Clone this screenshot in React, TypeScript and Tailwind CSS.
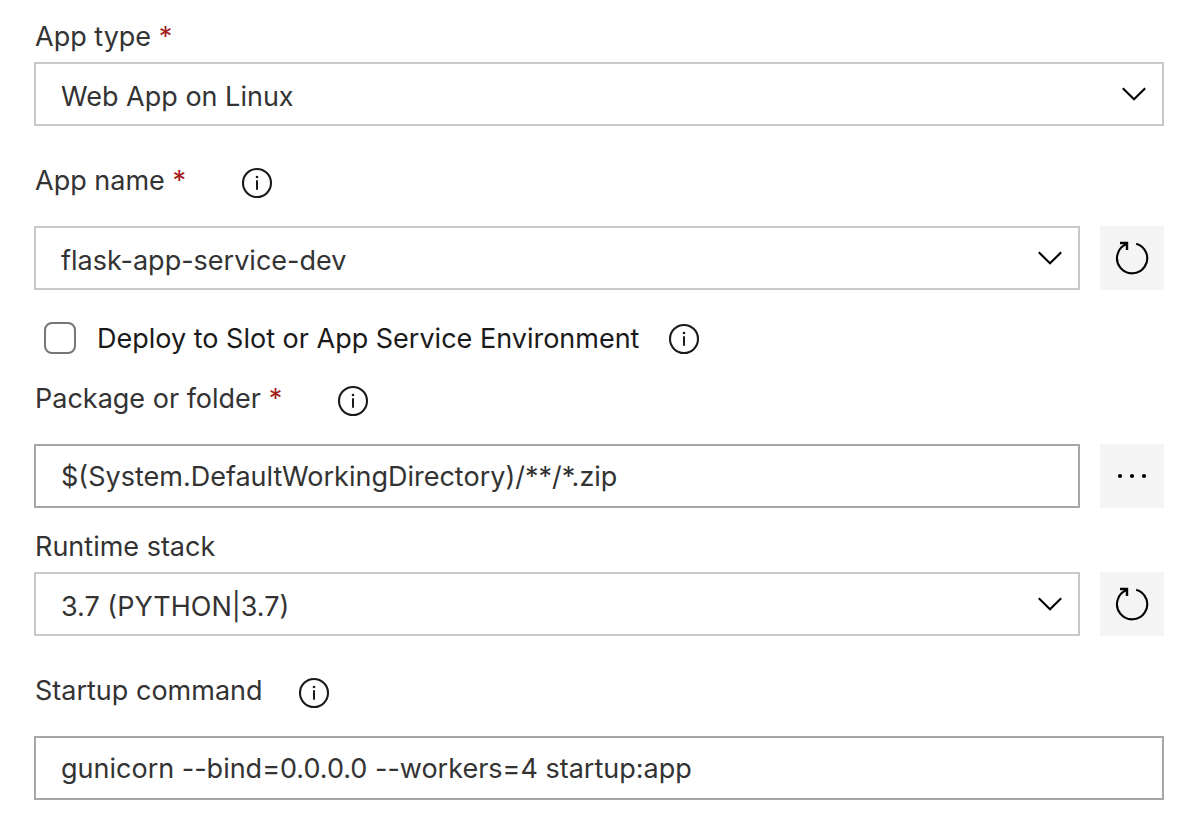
import { useId, type ReactNode } from "react";

function InfoIcon() {
  return (
    <svg className="size-8 shrink-0" viewBox="0 0 32 32" fill="none" aria-hidden="true">
      <circle cx="15" cy="16" r="14" stroke="#1a1a1a" strokeWidth="2.1" />
      <path d="M15 13.2V22.8" stroke="#1a1a1a" strokeWidth="2" />
      <circle cx="15" cy="10" r="1.3" fill="#1a1a1a" />
    </svg>
  );
}

function ChevronIcon() {
  return (
    <svg
      className="pointer-events-none absolute top-[21px] right-[18px] h-5 w-6"
      viewBox="0 0 24 20"
      fill="none"
      aria-hidden="true"
    >
      <path d="M0.8 5.3L12 16.3L23.2 5.3" stroke="#000" strokeWidth="2.1" />
    </svg>
  );
}

function RefreshIcon() {
  return (
    <svg className="size-9" viewBox="0 0 36 36" fill="none" aria-hidden="true">
      <path d="M22.2 3.7A15.1 15.1 0 1 1 12.8 4.1" stroke="#000" strokeWidth="2.1" />
      <path d="M6 3H13V10" stroke="#000" strokeWidth="2.4" />
    </svg>
  );
}

function MoreIcon() {
  return (
    <svg className="size-9" viewBox="0 0 36 36" fill="#000" aria-hidden="true">
      <circle cx="6" cy="18" r="2.1" />
      <circle cx="18" cy="18" r="2.1" />
      <circle cx="30" cy="18" r="2.1" />
    </svg>
  );
}

function InfoButton({ topic }: { topic: string }) {
  return (
    <button type="button" aria-label={"More information about " + topic} className="shrink-0">
      <InfoIcon />
    </button>
  );
}

type FieldProps = {
  label: string;
  required?: boolean;
  info?: boolean;
  action?: ReactNode;
  children: (id: string) => ReactNode;
};

function Field({ label, required, info, action, children }: FieldProps) {
  const id = useId();
  return (
    <div className={info ? "flex flex-col gap-[27px]" : "flex flex-col gap-[7px]"}>
      <div className={required ? "flex items-end gap-14 pl-px" : "flex items-end gap-9 pl-px"}>
        <label htmlFor={id} className="pb-0.5 leading-8">
          {label}
          {required && <span className="text-[#a4201c]"> *</span>}
        </label>
        {info && <InfoButton topic={label} />}
      </div>
      <div className="flex gap-5">
        {children(id)}
        {action}
      </div>
    </div>
  );
}

function Select({ id, value }: { id: string; value: string }) {
  return (
    <div className="relative min-w-0 flex-1">
      <select
        id={id}
        defaultValue={value}
        className="h-16 w-full appearance-none border-2 border-[#c8c8c8] bg-white pt-1.5 pr-14 pl-[25px]"
      >
        <option>{value}</option>
      </select>
      <ChevronIcon />
    </div>
  );
}

function TextBox({ id, value }: { id: string; value: string }) {
  return (
    <input
      id={id}
      type="text"
      defaultValue={value}
      className="h-16 min-w-0 flex-1 border-2 border-[#a6a6a6] bg-white px-[25px]"
    />
  );
}

function ActionButton({ label, children }: { label: string; children: ReactNode }) {
  return (
    <button
      type="button"
      aria-label={label}
      className="flex size-16 shrink-0 items-center justify-center bg-[#f4f4f4]"
    >
      {children}
    </button>
  );
}

export default function App() {
  return (
    <form className="flex flex-col bg-white pt-[21px] pr-3.5 pb-4 pl-[34px] font-['Inter',sans-serif] text-[27px] text-[#333]">
      <Field label="App type" required>
        {(id) => <Select id={id} value="Web App on Linux" />}
      </Field>

      <div className="pt-[39px]">
        <Field
          label="App name"
          required
          info
          action={
            <ActionButton label="Refresh app names">
              <RefreshIcon />
            </ActionButton>
          }
        >
          {(id) => <Select id={id} value="flask-app-service-dev" />}
        </Field>
      </div>

      <div className="flex items-end gap-[30px] pt-[31px] pl-2.5">
        <label className="flex items-center gap-[21px] leading-8 text-[#1a1a1a]">
          <input
            type="checkbox"
            className="size-8 shrink-0 appearance-none rounded-lg border-2 border-[#767676] bg-white"
          />
          <span className="pt-0.5">Deploy to Slot or App Service Environment</span>
        </label>
        <InfoButton topic="Deploy to Slot or App Service Environment" />
      </div>

      <div className="pt-7">
        <Field
          label="Package or folder"
          required
          info
          action={
            <ActionButton label="Browse">
              <MoreIcon />
            </ActionButton>
          }
        >
          {(id) => <TextBox id={id} value="$(System.DefaultWorkingDirectory)/**/*.zip" />}
        </Field>
      </div>

      <div className="pt-[23px]">
        <Field
          label="Runtime stack"
          action={
            <ActionButton label="Refresh runtime stacks">
              <RefreshIcon />
            </ActionButton>
          }
        >
          {(id) => <Select id={id} value="3.7 (PYTHON|3.7)" />}
        </Field>
      </div>

      <div className="pt-[39px]">
        <Field label="Startup command" info>
          {(id) => <TextBox id={id} value="gunicorn --bind=0.0.0.0 --workers=4 startup:app" />}
        </Field>
      </div>
    </form>
  );
}
